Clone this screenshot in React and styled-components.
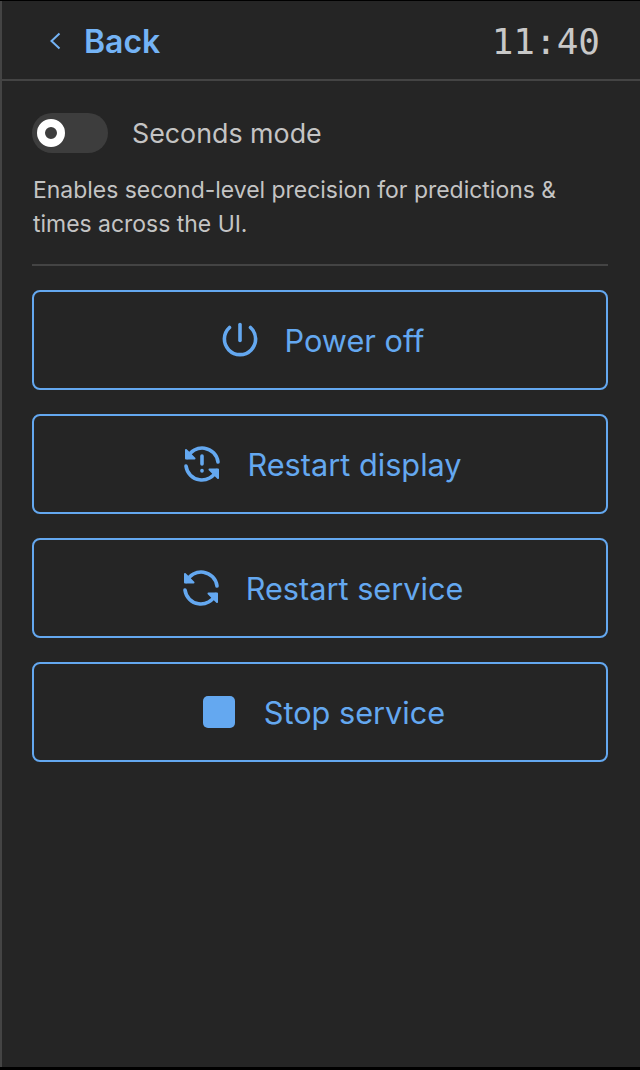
import React from "react";
import styled, { createGlobalStyle } from "styled-components";

const GlobalStyle = createGlobalStyle`
  html, body {
    margin: 0;
    padding: 0;
    background: #000;
  }
  * {
    box-sizing: border-box;
  }
`;

const Screen = styled.div`
  width: 640px;
  height: 1066px;
  margin-top: 1px;
  background: #252525;
  border-left: 2px solid #444;
  font-family: Inter, "Liberation Sans", sans-serif;
`;

const Header = styled.header`
  height: 80px;
  border-bottom: 2px solid #444;
  display: flex;
  align-items: center;
  justify-content: space-between;
  padding: 0 40px 0 46px;
`;

const BackLink = styled.a`
  display: flex;
  align-items: center;
  gap: 18px;
  padding-top: 2px;
  color: #74b3f5;
  font-size: 32px;
  font-weight: 600;
  svg {
    display: block;
  }
`;

const Clock = styled.div`
  font-family: "DejaVu Sans Mono", monospace;
  font-size: 36px;
  color: #c8c8c8;
  padding-top: 2px;
`;

const Content = styled.main`
  padding: 32px 32px 0 30px;
`;

const ToggleRow = styled.div`
  display: flex;
  align-items: center;
  gap: 24px;
  height: 40px;
`;

const Track = styled.div`
  width: 76px;
  height: 40px;
  border-radius: 20px;
  background: #3d3d3d;
  display: flex;
  align-items: center;
  padding-left: 5px;
`;

const Knob = styled.div`
  width: 28px;
  height: 28px;
  border-radius: 50%;
  border: 8px solid #fff;
  background: #3d3d3d;
`;

const ToggleLabel = styled.span`
  color: #c4c4c4;
  font-size: 26.8px;
`;

const Hint = styled.p`
  margin: 20px 0 0;
  padding-left: 1px;
  color: #c4c4c4;
  font-size: 22.95px;
  line-height: 34px;
`;

const Divider = styled.hr`
  margin: 23px 0 24px;
  border: 0;
  border-top: 2px solid #444;
`;

const Actions = styled.div`
  display: flex;
  flex-direction: column;
  gap: 24px;
`;

const ActionButton = styled.button`
  height: 100px;
  width: 100%;
  padding: 0 0 0 4px;
  background: transparent;
  border: 2px solid #64a8f0;
  border-radius: 8px;
  display: flex;
  align-items: center;
  justify-content: center;
  gap: 25px;
  color: #64a8f0;
  font-family: inherit;
  font-size: 30.7px;
  svg {
    display: block;
  }
`;

const Icon = ({ children }) => (
  <svg width="40" height="40" viewBox="0 0 40 40" fill="none" stroke="currentColor" strokeWidth="3.6" strokeLinecap="round" strokeLinejoin="round">
    {children}
  </svg>
);

const PowerIcon = () => (
  <Icon>
    <path d="M20 4.500v16" />
    <path d="M9.500 7.500A15.600 15.600 0 1 0 30.500 7.500" />
  </Icon>
);

const Arrows = () => (
  <>
    <path d="M5.500 13.500A16 16 0 0 1 36 18" />
    <path d="M34.500 26.500A16 16 0 0 1 4 22" />
    <path d="M4 6v8.500h8.500z" fill="currentColor" strokeWidth="2" />
    <path d="M36 34v-8.500h-8.500z" fill="currentColor" strokeWidth="2" />
  </>
);

const RestartAlertIcon = () => (
  <Icon>
    <Arrows />
    <path d="M20 12v8" />
    <path d="M20 26.500v.5" />
  </Icon>
);

const RestartIcon = () => (
  <Icon>
    <Arrows />
  </Icon>
);

const StopIcon = () => (
  <svg width="40" height="40" viewBox="0 0 40 40">
    <rect x="4" y="4" width="32" height="32" rx="5" fill="currentColor" />
  </svg>
);

const actions = [
  { label: "Power off", icon: <PowerIcon /> },
  { label: "Restart display", icon: <RestartAlertIcon /> },
  { label: "Restart service", icon: <RestartIcon /> },
  { label: "Stop service", icon: <StopIcon /> },
];

export default function App() {
  return (
    <>
      <GlobalStyle />
      <Screen>
        <Header>
          <BackLink>
            <svg width="18" height="22" viewBox="0 0 18 22" fill="none" stroke="currentColor" strokeWidth="2">
              <path d="M11.500 3.500 3.500 11l8 7.500" />
            </svg>
            Back
          </BackLink>
          <Clock>11:40</Clock>
        </Header>
        <Content>
          <ToggleRow>
            <Track>
              <Knob />
            </Track>
            <ToggleLabel>Seconds mode</ToggleLabel>
          </ToggleRow>
          <Hint>
            Enables second-level precision for predictions &amp;
            <br />
            times across the UI.
          </Hint>
          <Divider />
          <Actions>
            {actions.map((a) => (
              <ActionButton key={a.label}>
                {a.icon}
                {a.label}
              </ActionButton>
            ))}
          </Actions>
        </Content>
      </Screen>
    </>
  );
}
